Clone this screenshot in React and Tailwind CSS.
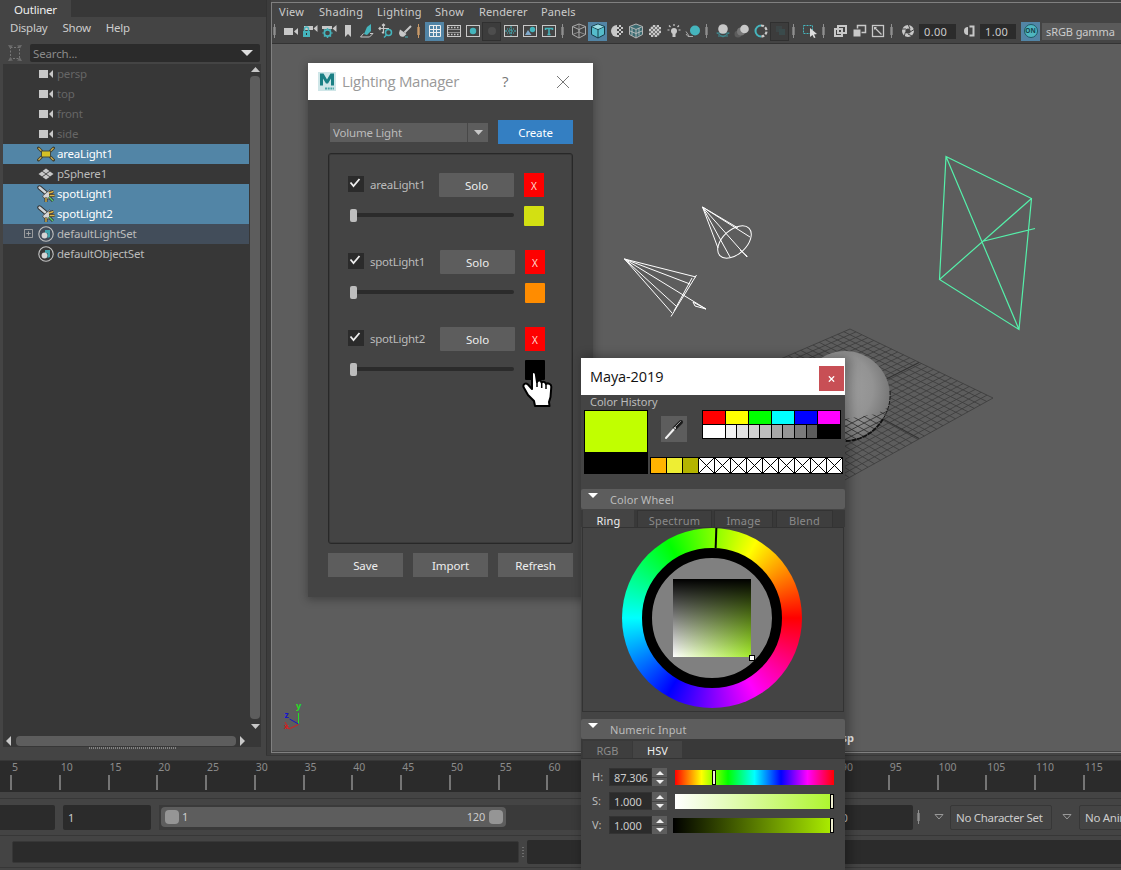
import React from "react";

const TEAL = "#45b5bd";
const LIGHT = "#c8c8c8";

/* ---------- toolbar ---------- */

function Sep({ orange }) {
  return (
    <svg viewBox="0 0 5 20" className="ml-[2px] mr-1 h-5 w-[5px] shrink-0">
      <path d="M2.500 3V17" stroke={orange ? "#c99a68" : "#8f8f8f"} strokeWidth="1" />
      <path d="M2.500 6V14" stroke={orange ? "#c99a68" : "#8f8f8f"} strokeWidth="2.400" />
    </svg>
  );
}

function Tool({ active, off, children }) {
  const bg = active ? "bg-[#5285a6]" : off ? "bg-[#3c3c3c] border border-[#303030]" : "";
  return (
    <div className={"flex h-[19px] w-[19px] shrink-0 items-center justify-center " + bg}>
      <svg viewBox="0 0 16 16" className="h-4 w-4 shrink-0" fill="none" stroke={LIGHT} strokeWidth="1">
        {children}
      </svg>
    </div>
  );
}

function Cube({ fill, stroke }) {
  return (
    <g stroke={stroke} fill={fill} strokeLinejoin="round">
      <path d="M8 1L14.500 3.500V11.500L8 15L1.500 11.500V3.500Z" />
      <path d="M1.500 3.500L8 6.500L14.500 3.500M8 6.500V15" />
    </g>
  );
}

function Checker({ half }) {
  const cells = [];
  for (let y = 0; y < 6; y++)
    for (let x = 0; x < 6; x++)
      if ((x + y) % 2 === 0 && Math.hypot(x - 2.5, y - 2.5) < 3.3 && (!half || x > 2))
        cells.push(<rect key={x + "-" + y} x={2 + x * 2} y={2 + y * 2} width="2" height="2" />);
  return (
    <g fill={LIGHT} stroke="none">
      {!half && <circle cx="8" cy="8" r="6" fill="#777" />}
      {cells}
      {half && <path d="M8 2A6 6 0 0 0 8 14Z" />}
    </g>
  );
}

function Toolbar() {
  return (
    <div className="flex h-5 items-center">
      <svg viewBox="0 0 5 20" className="mr-1 h-5 w-[5px] shrink-0">
        <path d="M2.500 3V17" stroke="#8f8f8f" />
        <path d="M2.500 6V14" stroke="#8f8f8f" strokeWidth="2.400" />
      </svg>
      <Tool><g fill={LIGHT} stroke="none"><rect x="1" y="5" width="9" height="7" /><path d="M11 8.500L15 5V12Z" /></g></Tool>
      <Tool>
        <g fill={LIGHT} stroke="none"><rect x="2" y="3" width="9" height="4" /><path d="M11.500 5.500L15.500 2V9Z" /></g>
        <rect x="1" y="8" width="7" height="6" fill={TEAL} stroke="none" />
        <path d="M2.500 8V6A2 2 0 0 1 6.500 6V8" stroke={TEAL} strokeWidth="1.500" />
        <rect x="4" y="10" width="1" height="2" fill="#333" stroke="none" />
      </Tool>
      <Tool>
        <g fill={LIGHT} stroke="none"><rect x="1" y="3" width="10" height="3" /><path d="M11.500 5.500L15.500 2V9Z" /></g>
        <circle cx="6.500" cy="10" r="3.200" stroke={TEAL} strokeWidth="1.700" />
        <path d="M6.500 5V6M6.500 14V15M1.500 10H2.500M10.500 10H11.500M3 6.500L4 7.500M10 6.500L9 7.500M3 13.500L4 12.500M10 13.500L9 12.500" stroke={TEAL} strokeWidth="1.500" />
      </Tool>
      <Tool><path d="M5 2H11V14L8 11L5 14Z" fill={LIGHT} stroke="none" /></Tool>
      <Tool>
        <path d="M5 11L8 4L12 1V8L8 12Z" fill={TEAL} stroke="none" />
        <path d="M4.500 10.500L1.500 14H10.500L14 10.500H11" stroke={LIGHT} />
      </Tool>
      <Tool>
        <path d="M5.500 1V10M1 5.500H11M4 2.500L5.500 1L7 2.500M2.500 4L1 5.500L2.500 7M4 9L5.500 10.500" strokeWidth="1.200" />
        <circle cx="10.500" cy="9.500" r="3" stroke={TEAL} strokeWidth="1.500" />
        <path d="M8.500 12L6 14.500" stroke={TEAL} strokeWidth="1.500" />
      </Tool>
      <Tool><path d="M14 3L7.500 9.500" strokeWidth="2" /><path d="M3 6.500L9.500 11L7 13.500Q3 15 2 10" fill={LIGHT} stroke="none" /><path d="M8 14H11" stroke={TEAL} /></Tool>
      <Sep orange />
      <Tool active><path d="M2.500 2.500H13.500V13.500H2.500ZM6.500 2.500V13.500M9.500 2.500V13.500M2.500 6.500H13.500M2.500 9.500H13.500" stroke="#eee" /></Tool>
      <Tool><rect x="1.500" y="2.500" width="13" height="11" /><path d="M2 4.500H14M2 11.500H14" strokeDasharray="1.500 1.500" strokeWidth="1.500" /><path d="M2 6.500H14M2 9.500H14" strokeWidth=".6" /></Tool>
      <Tool><rect x="1.500" y="2.500" width="13" height="11" /><circle cx="8" cy="8" r="3.200" fill={TEAL} stroke="none" /></Tool>
      <Tool off><circle cx="8" cy="8" r="4" fill="#4d4d4d" stroke="none" /></Tool>
      <Tool><rect x="1.500" y="2.500" width="13" height="11" /><path d="M2 8H14M8 3V13" stroke={TEAL} strokeDasharray="2 1" /><path d="M4 6H12M4 10H12" stroke={TEAL} strokeDasharray="1 1" /></Tool>
      <Tool><rect x="1.500" y="2.500" width="13" height="11" /><circle cx="10.500" cy="6.500" r="2.700" fill={TEAL} stroke="none" /><path d="M3 12L6 7L9.500 12Z" fill="#7fa9cc" stroke="none" /></Tool>
      <Tool><rect x="1.500" y="2.500" width="13" height="11" /><path d="M4.500 7V5.500H11.500V7M8 5.500V11.500M6.500 11.500H9.500" stroke={TEAL} strokeWidth="1.500" /></Tool>
      <Sep />
      <Tool><Cube stroke="#aaa" fill="none" /><path d="M1.500 11.500L8 9L14.500 11.500M8 1V9" stroke="#aaa" strokeWidth=".7" /></Tool>
      <Tool active><Cube stroke="#173c48" fill="#55bccb" /><path d="M8 1.500L13.500 3.700L8 6L2.500 3.700Z" fill="#9bdce4" stroke="none" /></Tool>
      <Tool><Checker half /></Tool>
      <Tool><Cube stroke="#b5b5b5" fill="#3a6a70" /><path d="M4 5V12.500M11 5V12.500M2 8L8 10.500L14 8" stroke="#c8c8c8" strokeWidth=".8" /></Tool>
      <Tool><Checker /></Tool>
      <Tool>
        <circle cx="8" cy="8" r="3" fill={LIGHT} stroke="none" /><rect x="6.500" y="10" width="3" height="4" fill={LIGHT} stroke="none" />
        <path d="M8 1V3M1.500 7H3.500M12.500 7H14.500M3 2.500L4.500 4M13 2.500L11.500 4" strokeWidth="1.200" />
      </Tool>
      <Tool><circle cx="10" cy="7.500" r="5" fill={TEAL} stroke="none" /><path d="M1 8.500L4 13M1 11L3 13.500M3 13.500H8" stroke="#aaa" /></Tool>
      <Sep />
      <Tool>
        <path d="M1.500 10H14.500M3 13H13M2 10L8 14L14 10" stroke="#3c8a91" />
        <circle cx="8" cy="6" r="4.800" fill={LIGHT} stroke="none" />
      </Tool>
      <Tool><circle cx="4" cy="11" r="3.500" fill="#5c5c5c" stroke="none" /><circle cx="7" cy="8.500" r="4" fill="#777" stroke="none" /><circle cx="10.500" cy="6" r="4.300" fill={LIGHT} stroke="none" /></Tool>
      <Tool><path d="M8 2.500A5.500 5.500 0 0 0 8 13.500" stroke={TEAL} strokeWidth="2" /><path d="M8 2.500A5.500 5.500 0 0 1 8 13.500" strokeWidth="2.200" strokeDasharray="3 1.500" /></Tool>
      <Tool off><rect x="4" y="3" width="6" height="6" fill="#3c4546" stroke="none" /><rect x="7" y="6" width="6" height="6" fill="#3a4a4b" stroke="none" /></Tool>
      <Sep />
      <Tool><rect x="1.500" y="2.500" width="9" height="8" stroke={TEAL} strokeDasharray="2 1" /><path d="M8 5L15 11L12 11.500L13.500 14.500L12 15L10.500 12L8 14Z" fill="#ddd" stroke="none" /></Tool>
      <Sep />
      <Tool><g strokeWidth="2"><rect x="6" y="3" width="8" height="7" /><rect x="3" y="6" width="7" height="7" /></g></Tool>
      <Tool><rect x="6.500" y="2.500" width="8" height="7" strokeWidth="1.500" /><rect x="2" y="6" width="8" height="8" fill={LIGHT} stroke="#444" /></Tool>
      <Tool><rect x="2.500" y="2.500" width="11" height="11" strokeWidth="1.300" /><path d="M5 5L11.500 11.500" strokeWidth="1.300" /><path d="M4 4H7L4 7Z" fill={LIGHT} stroke="none" /></Tool>
      <Sep />
      <Tool>
        <circle cx="8" cy="8" r="4.300" strokeWidth="3.400" />
        <path d="M8 1L10 6M15 6L10 9M12 13L8 11M4 14L5.500 9M1 6L6 6" stroke="#444" />
      </Tool>
      <div className="ml-[2px] h-[15px] w-[37px] bg-[#2b2b2b] pl-[5px] text-[11px] leading-[15px] tracking-[.35px] text-[#ccc]">0.00</div>
      <div className="ml-[3px] flex">
        <Tool><path d="M8.500 3.500H12.500V12.500H8.500" strokeWidth="2" /><path d="M7 4A4 4 0 0 0 7 12Z" fill={LIGHT} stroke="none" /></Tool>
      </div>
      <div className="ml-[2px] h-[15px] w-[36px] bg-[#2b2b2b] pl-[5px] text-[11px] leading-[15px] tracking-[.35px] text-[#ccc]">1.00</div>
      <div className="ml-[5px] flex h-[19px] w-[19px] shrink-0 items-center justify-center bg-[#5285a6]">
        <div className="flex h-[14px] w-[14px] items-center justify-center rounded-full border border-[#1d5a66] bg-[#4fb6c0] text-[6.500px] font-bold text-[#17444c]">ON</div>
      </div>
      <div className="ml-[2px] h-[17px] grow whitespace-nowrap bg-[#5a5a5a] pl-1 text-[11px] leading-[18px] tracking-[-.1px] text-[#ccc]">sRGB gamma</div>
    </div>
  );
}

/* ---------- outliner ---------- */

const CamIcon = () => (
  <svg viewBox="0 0 16 16" className="h-4 w-4"><path d="M1 4H10V12H1ZM11 8L15 4V12Z" fill={LIGHT} /></svg>
);
const AreaIcon = () => (
  <svg viewBox="0 0 18 16" className="h-4 w-[18px]" fill="none">
    <path d="M1.500 2L4.500 5M16.500 2L13.500 5M1.500 14L4.500 11M16.500 14L13.500 11" stroke="#3d3d2c" strokeWidth="3" strokeLinecap="round" />
    <path d="M1.500 2L4.500 5M16.500 2L13.500 5M1.500 14L4.500 11M16.500 14L13.500 11" stroke="#c8a94f" strokeWidth="1.400" />
    <rect x="4.500" y="5" width="9" height="6" fill="#d6c024" stroke="#444a3c" />
  </svg>
);
const MeshIcon = () => (
  <svg viewBox="0 0 16 16" className="h-4 w-4">
    <path d="M8 2.500L11.500 5L8 7.500L4.500 5ZM4 5.500L7.500 8L4 10.500L.5 8ZM12 5.500L15.500 8L12 10.500L8.500 8ZM8 8.500L11.500 11L8 13.500L4.500 11Z" fill={LIGHT} />
  </svg>
);
const SpotIcon = () => (
  <svg viewBox="0 0 18 18" className="h-[18px] w-[18px]" fill="none">
    <path d="M2.500 2.500L9 8" stroke="#333" strokeWidth="4.400" strokeLinecap="round" />
    <path d="M2.500 2.500L9 8" stroke="#cfd6da" strokeWidth="2.400" strokeLinecap="round" />
    <path d="M12.500 5A5 5 0 1 1 5.500 11Z" fill="#d4d4d4" stroke="#444" strokeWidth=".8" />
    <path d="M12 8L16.500 6.500M12 10.500H17.500M12 12L16 16M9 12.500V17" stroke="#333" strokeWidth="3" />
    <path d="M12 8L16.500 6.500M12.500 10.500H17.500" stroke="#dcb548" strokeWidth="1.400" />
    <path d="M12 12L16 16" stroke="#5fc96a" strokeWidth="1.400" />
    <path d="M9 13V17" stroke="#dcb548" strokeWidth="1.400" />
  </svg>
);
const SetIcon = () => (
  <svg viewBox="0 0 16 16" className="h-4 w-4" fill="none">
    <circle cx="8" cy="8" r="7.200" stroke="#c0c0c0" strokeWidth="1.100" />
    <path d="M7 4H12V11L9.500 12V7H7Z" fill="#3fa3ac" />
    <circle cx="6.500" cy="9.500" r="2.900" fill="#d5d5d5" />
  </svg>
);

const NODES = [
  { name: "persp", icon: CamIcon, kind: "dim" },
  { name: "top", icon: CamIcon, kind: "dim" },
  { name: "front", icon: CamIcon, kind: "dim" },
  { name: "side", icon: CamIcon, kind: "dim" },
  { name: "areaLight1", icon: AreaIcon, kind: "sel" },
  { name: "pSphere1", icon: MeshIcon },
  { name: "spotLight1", icon: SpotIcon, kind: "sel" },
  { name: "spotLight2", icon: SpotIcon, kind: "sel" },
  { name: "defaultLightSet", icon: SetIcon, kind: "rel", expand: true },
  { name: "defaultObjectSet", icon: SetIcon },
];
const ROW = {
  dim: "text-[#666]",
  sel: "bg-[#5285a6] text-white",
  rel: "bg-[#424d5a] text-[#bbb]",
};

function Tri({ dir = "down", className = "", fill = LIGHT }) {
  const d = { down: "M0 0H10L5 5Z", up: "M0 5H10L5 0Z" }[dir];
  return <svg viewBox="0 0 10 5" className={className} preserveAspectRatio="none"><path d={d} fill={fill} /></svg>;
}

function Outliner() {
  return (
    <div className="flex h-[756px] w-[266px] shrink-0 flex-col bg-[#444]">
      <div className="flex h-[17px] bg-[#373737]">
        <div className="w-[71px] bg-[#444] pl-[14px] pt-[2px] text-[11.500px] leading-[15px] tracking-[-.2px] text-[#eee]">Outliner</div>
      </div>
      <div className="flex h-[26px] gap-[15px] pl-[10px] pt-[3px] text-[11.500px] leading-4 tracking-[-.25px] text-[#ccc]">
        <span>Display</span><span>Show</span><span>Help</span>
      </div>
      <div className="flex h-[21px] items-start pl-[7px] pt-[1px]">
        <svg viewBox="0 0 16 18" className="mr-[7px] h-[18px] w-4" fill="none">
          <rect x="3.500" y="3.500" width="9" height="11" stroke="#777" strokeDasharray="2 1.500" />
          <path d="M1 1L6 1.500L3 4.500ZM15 1L10 1.500L13 4.500ZM1 17L6 16.500L3 13.500ZM15 17L10 16.500L13 13.500Z" fill="#6c6c6c" />
        </svg>
        <div className="flex h-[18px] w-[230px] items-center justify-between rounded-[2px] bg-[#2b2b2b] pl-[3px] pr-[7px]">
          <span className="pt-[2px] text-[11.500px] tracking-[-.15px] text-[#8a8a8a]">Search...</span>
          <Tri className="h-[6px] w-3" fill="#ddd" />
        </div>
      </div>
      <div className="ml-[3px] flex h-[683px] w-[258px] flex-col bg-[#373737]">
        <div className="flex h-[668px]">
          <div className="w-[246px]">
            {NODES.map((n) => (
              <div key={n.name} className={"flex h-5 items-center text-[11.500px] tracking-[-.2px] " + (ROW[n.kind] || "text-[#bbb]")}>
                <div className="flex w-[33px] justify-end pr-[3px]">
                  {n.expand && (
                    <svg viewBox="0 0 10 10" className="mb-[2px] h-[9px] w-[9px]" fill="none" stroke="#aaa"><path d="M.5.5H9.500V9.500H.5ZM2.500 5H7.500M5 2.500V7.500" /></svg>
                  )}
                </div>
                <div className="mr-px flex w-5 justify-center"><n.icon /></div>
                <span className="leading-5">{n.name}</span>
              </div>
            ))}
          </div>
          <div className="flex w-3 flex-col items-center">
            <Tri dir="up" className="mt-[3px] h-[5px] w-[9px]" />
            <div className="mt-[4px] w-[10px] grow rounded-[4px] bg-[#5d5d5d]" />
            <Tri className="mb-[3px] mt-[5px] h-[5px] w-[9px]" />
          </div>
        </div>
        <div className="flex h-[15px] items-start gap-1 pl-[3px] pt-1">
          <svg viewBox="0 0 5 10" className="h-[10px] w-[5px]"><path d="M5 0V10L0 5Z" fill={LIGHT} /></svg>
          <div className="ml-[1px] h-[10px] w-[220px] rounded-[4px] bg-[#5d5d5d]" />
          <svg viewBox="0 0 5 10" className="h-[10px] w-[5px]"><path d="M0 0V10L5 5Z" fill={LIGHT} /></svg>
        </div>
      </div>
      <svg viewBox="0 0 87 2" className="ml-[89px] h-[2px] w-[87px]"><path d="M0 1H87" stroke="#999" strokeWidth="1.500" strokeDasharray="1 1" /></svg>
    </div>
  );
}

/* ---------- viewport ---------- */

const T = [850, 329], R = [993, 398], B = [843, 481], L = [702, 393];
const mix = (a, b, t) => [a[0] + (b[0] - a[0]) * t, a[1] + (b[1] - a[1]) * t];

function gridPath() {
  let d = "";
  for (let i = 0; i <= 24; i++) {
    const t = i / 24;
    const seg = [[mix(T, R, t), mix(L, B, t)], [mix(T, L, t), mix(R, B, t)]];
    for (const [a, b] of seg) d += `M${a[0].toFixed(1)} ${a[1].toFixed(1)}L${b[0].toFixed(1)} ${b[1].toFixed(1)}`;
  }
  return d;
}

function Scene() {
  return (
    <svg viewBox="272 44 849 707" className="block h-[707px] w-[849px]" fill="none">
      <defs>
        <radialGradient id="ball" cx="0.42" cy="0.42" r="0.6">
          <stop offset="0" stopColor="#a2a2a2" />
          <stop offset="0.65" stopColor="#939393" />
          <stop offset="1" stopColor="#757575" />
        </radialGradient>
        <clipPath id="lower"><path d="M800 424L845 419L876 414L892 405V445H800Z" /></clipPath>
        <clipPath id="disc"><circle cx="845" cy="396" r="45" /></clipPath>
      </defs>
      <path d={gridPath()} stroke="#3d3d3d" strokeWidth=".85" />
      <path d="M919 362.500L772 437M919 438.500L776 361" stroke="#333" strokeWidth="1.200" />
      <circle cx="845" cy="396" r="45" fill="url(#ball)" />
      <g clipPath="url(#disc)"><path d={gridPath()} stroke="#2e2e2e" strokeWidth=".8" clipPath="url(#lower)" /></g>
      <path d="M890 391A45 45 0 0 1 883 419" stroke="#161616" strokeWidth="1" strokeDasharray="4 1" />
      <path d="M883 419A45 45 0 0 1 845 441" stroke="#111" strokeWidth="1.800" strokeDasharray="5 .7" />

      <g stroke="#55f0aa" strokeWidth="1.200">
        <path d="M946 156.500L1031.500 198.500L1019 329.500L939.500 279.500ZM946 156.500L1019 329.500M1031.500 198.500L939.500 279.500M982 241.500L1035 228.500" />
      </g>

      <g stroke="#fff" strokeWidth="1">
        <path d="M702.500 207L738 228M702.500 207L750 237M702.500 207L747 257M702.500 207L730 257M702.500 207L718 248M740 250L747.500 256.500" />
        <ellipse cx="734.500" cy="242" rx="20" ry="12" transform="rotate(-43 734.500 242)" />
        <path d="M624.500 259L696 277M624.500 259L690 284M624.500 259L706 309M624.500 259L676 306M624.500 259L672 313M696.500 275L671 316.500M692 278L674 311" />
        <path d="M693 302L706 309L695 306Z" />
      </g>
      <path d="M298.500 724V713" stroke="#25e025" />
      <path d="M298.500 724L289.500 719" stroke="#1515c8" />
      <path d="M298.500 724.500L289 729L285 722" stroke="#d42020" />
      <g fontFamily="Noto Sans, sans-serif" fontSize="9" fontWeight="700">
        <text x="296" y="709" fill="#25e025">y</text>
        <text x="284.500" y="717.500" fill="#1515c8" fontSize="8.500">z</text>
        <text x="284" y="728.500" fill="#d42020" fontSize="7.500">x</text>
        <text x="823" y="742" fontSize="11" fill="#eee">persp</text>
      </g>
    </svg>
  );
}

function Viewport() {
  return (
    <div className="mt-[2px] flex h-[751px] w-[850px] shrink-0 flex-col overflow-hidden border-b border-l border-t border-[#808080] bg-[#444]">
      <div className="flex h-[18px] pl-[7px] pt-px text-[11px] leading-4 tracking-[.3px] text-[#ccc]">
        <span className="w-10">View</span>
        <span className="w-[58px]">Shading</span>
        <span className="w-[58px]">Lighting</span>
        <span className="w-11">Show</span>
        <span className="w-[62px] tracking-[.1px]">Renderer</span>
        <span className="tracking-[.1px]">Panels</span>
      </div>
      <Toolbar />
      <div className="mt-[2px] h-[708px] overflow-hidden border-t border-[#333] bg-[#5d5d5d]"><Scene /></div>
    </div>
  );
}

/* ---------- timeline and range ---------- */

function Timeline() {
  const ticks = Array.from({ length: 23 }, (_, i) => (i + 1) * 5);
  const covered = (n) => n > 60 && n < 90;
  return (
    <div className="mt-[4px] h-8 border-t border-[#373737] bg-[#2b2b2b]">
      <div className="flex w-[1130px] pl-[10px]">
        {ticks.map((n) => (
          <div key={n} className="h-8 w-[48.780px] shrink-0">
            <div className="h-[14px] pl-[2px] text-[10.500px] leading-[12px] text-[#8c8c8c]">{covered(n) ? null : n}</div>
            <div className="h-[15px] w-[2px] bg-[#757575]" />
          </div>
        ))}
      </div>
    </div>
  );
}

function RangeRow() {
  return (
    <div className="mt-[6px] flex h-[38px] items-center border-y border-[#373737] text-[11px] text-[#ccc]">
      <div className="h-[25px] w-[55px] shrink-0 rounded-r-[2px] bg-[#2b2b2b]" />
      <div className="ml-2 h-[25px] w-[88px] shrink-0 rounded-[2px] bg-[#2b2b2b] pl-[5px] leading-[26px]">1</div>
      <div className="ml-2 flex h-[25px] w-[600px] shrink-0 items-center bg-[#3a3a3a]">
        <div className="ml-[2px] flex h-[20px] w-[345px] items-center justify-between rounded-[4px] bg-[#5d5d5d] pl-1 pr-[3px]">
          <span className="flex items-center gap-[3px]"><i className="h-[14px] w-[14px] rounded-[4px] bg-[#959595]" />1</span>
          <span className="flex items-center gap-1 tracking-[-.2px]">120<i className="h-[14px] w-[14px] rounded-[4px] bg-[#959595]" /></span>
        </div>
      </div>
      <div className="ml-2 h-[25px] w-[146px] shrink-0 rounded-[2px] bg-[#2b2b2b] pl-[62px] leading-[25px]">200</div>
      <div className="ml-px flex"><Sep /></div>
      <svg viewBox="0 0 10 6" className="ml-[9px] h-[6px] w-[10px] shrink-0" fill="none" stroke="#999"><path d="M1 .5H9L5 5Z" /></svg>
      <div className="ml-[6px] h-[25px] w-[102px] shrink-0 rounded-[2px] border border-[#373737] bg-[#444] pl-[5px] text-[11.500px] leading-[24px] tracking-[-.3px]">No Character Set</div>
      <svg viewBox="0 0 10 6" className="ml-[10px] h-[6px] w-[10px] shrink-0" fill="none" stroke="#999"><path d="M1 .5H9L5 5Z" /></svg>
      <div className="ml-[7px] h-[25px] w-[102px] shrink-0 whitespace-nowrap rounded-[2px] border border-[#373737] pl-[5px] text-[11.500px] leading-[24px] tracking-[-.3px]">No Anim Layer</div>
    </div>
  );
}

function CommandLine() {
  return (
    <div className="flex h-8 items-center border-b border-[#373737]">
      <div className="ml-3 h-[22px] w-[507px] shrink-0 rounded-[2px] border border-[#373737] bg-[#2b2b2b]" />
      <svg viewBox="0 0 2 10" className="ml-[3px] h-[10px] w-[2px] shrink-0"><path d="M1 0V10" stroke="#999" strokeDasharray="1 2" /></svg>
      <div className="ml-[3px] h-6 grow rounded-l-[2px] bg-[#2b2b2b]" />
    </div>
  );
}

/* ---------- lighting manager window ---------- */

const LIGHTS = [
  { name: "areaLight1", swatch: "bg-[#d3e012]", inset: "pl-0" },
  { name: "spotLight1", swatch: "bg-[#ff8c00]", inset: "pl-px" },
  { name: "spotLight2", swatch: "bg-black", inset: "pl-px" },
];

function LightRow({ light }) {
  return (
    <div className="h-[77px]">
      <div className="flex h-6 items-center">
        <svg viewBox="0 0 16 16" className="mb-[2px] h-4 w-4 bg-[#2b2b2b]" fill="none"><path d="M2.500 6.500L5.500 10L11.500 3" stroke="#eee" strokeWidth="1.800" /></svg>
        <span className="w-[75px] pl-[6px] text-[11.500px] tracking-[-.25px] text-[#bbb]">{light.name}</span>
        <div className={"flex " + light.inset}>
          <div className="h-6 w-[75px] rounded-[1px] bg-[#5d5d5d] text-center text-[11.500px] leading-[26px] text-[#eee]">Solo</div>
          <div className="ml-[10px] h-6 w-5 bg-[#fe0000] text-center text-[10px] leading-[26px] text-[#ffd8d0]">X</div>
        </div>
      </div>
      <div className="mt-[9px] flex h-5 items-center">
        <div className="flex h-5 w-[166px] items-center pb-[2px]">
          <div className="ml-[2px] h-[13px] w-[7px] rounded-[2px] bg-[#bdbdbd]" />
          <div className="h-[4px] grow rounded-r bg-[#2b2b2b]" />
        </div>
        <div className={"ml-[10px] " + light.inset}><div className={"h-5 w-5 rounded-[1px] " + light.swatch} /></div>
      </div>
    </div>
  );
}

function LightingManager() {
  return (
    <div className="absolute left-[308px] top-[63px] h-[534px] w-[285px] bg-[#444] shadow-[0_2px_8px_1px_rgba(0,0,0,.28)]">
      <div className="flex h-[37px] items-center bg-white pl-[9px]">
        <svg viewBox="0 0 20 20" className="h-5 w-5">
          <rect x="1" y="0" width="18" height="19" fill="#cfe6e8" />
          <path d="M3 1.500H6.500L10 7.500L13.500 1.500H17V13.500H14V6.500L11 11.500H9L6 6.500V13.500H3Z" fill="#1b8085" />
          <path d="M8 16.500H17" stroke="#4ba6a8" strokeWidth="2" strokeDasharray="2 .7" />
        </svg>
        <span className="w-[165px] whitespace-nowrap pl-[5px] font-['Open_Sans'] text-[15px] tracking-[-.27px] text-[#999]">Lighting Manager</span>
        <span className="font-['Open_Sans'] text-[15px] text-[#777]">?</span>
        <svg viewBox="0 0 12 12" className="ml-[49px] h-3 w-3" stroke="#777"><path d="M0 0L12 12M12 0L0 12" /></svg>
      </div>
      <div className="px-5 pt-5">
        <div className="flex h-6 items-center">
          <div className="ml-[2px] flex h-[19px] w-[158px] bg-[#5d5d5d]">
            <div className="w-[138px] border-r border-[#484848] pl-[3px] text-[11.500px] leading-[20px] tracking-[-.2px] text-[#bbb]">Volume Light</div>
            <div className="flex grow items-center justify-center"><Tri className="h-[5px] w-[9px]" /></div>
          </div>
          <div className="ml-[10px] h-6 w-[75px] bg-[#347fc2] text-center text-[11.500px] leading-[26px] tracking-[-.15px] text-white">Create</div>
        </div>
        <div className="mt-[9px] h-[391px] rounded-[3px] border border-[#282828] pl-[19px] pt-[19px] shadow-[inset_0_0_0_1px_#3a3a3a]">
          {LIGHTS.map((l) => <LightRow key={l.name} light={l} />)}
        </div>
        <div className="mt-[9px] flex gap-[10px] text-center text-[11.500px] leading-[26px] tracking-[-.1px] text-[#eee]">
          {["Save", "Import", "Refresh"].map((t) => <div key={t} className="h-6 w-[75px] bg-[#5d5d5d]">{t}</div>)}
        </div>
      </div>
    </div>
  );
}

/* ---------- colour chooser window ---------- */

function Section({ title }) {
  return (
    <div className="flex h-5 items-center rounded-[2px] bg-[#5d5d5d]">
      <Tri className="mb-[7px] ml-[7px] h-[5px] w-[10px]" fill="#fff" />
      <span className="ml-[12px] pt-[2px] text-[11px] tracking-[.1px] text-[#bbb]">{title}</span>
    </div>
  );
}

function NumberRow({ label, value, bar, knob, wide }) {
  return (
    <div className="flex h-6 items-center">
      <span className="w-[17px] pt-px text-[11px] text-[#bbb]">{label}:</span>
      <div className="h-[18px] w-[43px] border border-[#333] bg-[#2b2b2b] pl-1 text-[11px] leading-[18px] tracking-[-.1px] text-[#ccc]">{value}</div>
      <div className="flex h-[18px] w-[15px] flex-col gap-px">
        <div className="flex h-[9px] items-center justify-center bg-[#5d5d5d]"><Tri dir="up" className="h-1 w-2" fill="#eee" /></div>
        <div className="flex h-[8px] items-center justify-center bg-[#5d5d5d]"><Tri className="h-1 w-2" fill="#eee" /></div>
      </div>
      <div className={(wide ? "ml-[6px] w-[161px]" : "ml-[8px] w-[159px]") + " flex h-[15px] " + bar}>
        <div className={"h-[15px] w-1 border border-black bg-[#efefcf] " + knob} />
      </div>
    </div>
  );
}

const HUES = ["bg-[#f00]", "bg-[#ff0]", "bg-[#0f0]", "bg-[#0ff]", "bg-[#00f]", "bg-[#f0f]"];
const GREYS = [
  "w-[22px] bg-white", "w-[10.500px] bg-[#f2f2f2]", "w-[11px] bg-[#e2e2e2]", "w-[10.500px] bg-[#d0d0d0]", "w-[11px] bg-[#bdbdbd]",
  "w-[10.500px] bg-[#a8a8a8]", "w-[11px] bg-[#969696]", "w-[10.500px] bg-[#7a7a7a]", "w-[11px] bg-[#5c5c5c]", "w-[22px] bg-black",
];
const HISTORY = ["bg-[#ffb400]", "bg-[#eeee33]", "bg-[#b4b400]"];

function ColorChooser() {
  return (
    <div className="absolute left-[581px] top-[358px] h-[512px] w-[264px] overflow-hidden bg-[#444]">
      <div className="flex h-[37px] items-center justify-between bg-white pl-[9px] pr-[1px]">
        <span className="font-['Open_Sans'] text-[14.500px] tracking-[-.1px] text-[#111]">Maya-2019</span>
        <div className="mt-1 flex h-[25px] w-[25px] items-center justify-center bg-[#c84f55]">
          <svg viewBox="0 0 8 8" className="h-[6px] w-[7px]" stroke="#fff" strokeWidth="1.800"><path d="M.5.5L7.500 7.500M7.500.5L.5 7.500" /></svg>
        </div>
      </div>
      <div className="h-[15px] pl-[9px] text-[11px] leading-[13px] text-[#bbb]">Color History</div>
      <div className="flex h-[79px] pl-[3px]">
        <div className="h-[64px] w-[64px] border border-black bg-black"><div className="h-[41px] bg-[#c1ff00]" /></div>
        <div className="ml-[2px] w-[193px]">
          <div className="flex h-[47px] justify-between pl-[11px] pr-[2px]">
            <div className="mt-[6px] h-[26px] w-[26px] bg-[#5d5d5d]">
              <svg viewBox="0 0 26 26" className="h-[26px] w-[26px]" strokeLinecap="round">
                <path d="M14 12L20 6" stroke="#1c1c1c" strokeWidth="4" /><path d="M14.500 10.500L19.500 5.500" stroke="#999" strokeWidth="1" />
                <path d="M5 22L14 12" stroke="#f2f2f2" strokeWidth="2" /><path d="M12 11.500L14.500 14" stroke="#333" strokeWidth="1" />
              </svg>
            </div>
            <div className="h-[29px] w-[139px] bg-black p-px">
              <div className="flex h-[13px] gap-px">{HUES.map((h) => <div key={h} className={"h-[13px] grow " + h} />)}</div>
              <div className="mt-px flex h-[13px] gap-px">{GREYS.map((g) => <div key={g} className={"h-[13px] " + g} />)}</div>
            </div>
          </div>
          <div className="flex h-[17px] w-[193px] gap-px border border-black bg-black">
            {Array.from({ length: 12 }, (_, i) => (
              <div key={i} className={"h-[15px] w-[15px] shrink-0 " + (HISTORY[i] || "bg-white")}>
                {i > 2 && <svg viewBox="0 0 15 15" className="h-[15px] w-[15px]" stroke="#000"><path d="M0 0L15 15M15 0L0 15" /></svg>}
              </div>
            ))}
          </div>
        </div>
      </div>
      <Section title="Color Wheel" />
      <div className="mt-px flex h-[17px] bg-[#393939] pl-[2px] text-center text-[11px] leading-[21px] tracking-[.2px] text-[#8a8a8a]">
        <div className="w-[51px] bg-[#444] text-[#eee]">Ring</div>
        <div className="ml-[3px] w-[75px] border-x border-t border-[#333] bg-[#3e3e3e] leading-[19px]">Spectrum</div>
        <div className="ml-[2px] w-[59px] border-x border-t border-[#333] bg-[#3e3e3e] leading-[19px]">Image</div>
        <div className="ml-[3px] w-[57px] border-x border-t border-[#333] bg-[#3e3e3e] leading-[19px]">Blend</div>
      </div>
      <div className="mx-px flex h-[185px] justify-center border border-[#333] pr-[2px]">
        <div className="flex h-[180px] w-[180px] items-center justify-center rounded-full bg-[conic-gradient(from_90deg,#f00,#f0f,#00f,#0ff,#0f0,#ff0,#f00)]">
          <div className="flex h-[140px] w-[140px] items-center justify-center rounded-full border-[10.500px] border-black bg-[#808080]">
            <div className="relative h-[78px] w-[78px] bg-[linear-gradient(to_bottom,#000,transparent),linear-gradient(to_right,#fff,#a4ec2c)]">
              <div className="absolute -bottom-1 -right-1 h-[6px] w-[6px] border border-black bg-white" />
              <div className="absolute -top-[51px] left-[42px] h-5 w-[2px] rotate-[2deg] bg-black" />
            </div>
          </div>
        </div>
      </div>
      <div className="mt-[7px]"><Section title="Numeric Input" /></div>
      <div className="flex h-5 items-end border-b border-[#333] bg-[#393939] pl-[2px] text-center text-[11px] leading-[19px] text-[#8a8a8a]">
        <div className="h-[17px] w-[49px] bg-[#3e3e3e]">RGB</div>
        <div className="ml-[1px] h-[17px] w-[49px] bg-[#444] text-[#eee]">HSV</div>
      </div>
      <div className="pl-[11px] pt-[6px]">
        <NumberRow label="H" value="87.306" bar="bg-[linear-gradient(to_right,#f00,#ff0,#0f0,#0ff,#00f,#f0f,#f00)]" knob="ml-[37px]" />
        <NumberRow label="S" value="1.000" bar="bg-[linear-gradient(to_right,#fff,#adf52b)]" knob="ml-auto" />
        <NumberRow label="V" value="1.000" wide bar="bg-[linear-gradient(to_right,#000,#adf000)]" knob="ml-auto" />
      </div>
    </div>
  );
}

function HandCursor() {
  return (
    <svg viewBox="0 0 32 38" className="absolute left-[522px] top-[370px] h-[38px] w-8">
      <path d="M10 3C11 1.500 13.500 2 13.800 4L15 12C16 10 19 10 19.500 12.500C21 11 23.500 12 24 14C26 12.500 29.500 14 29.300 17L28.500 27L27 32L27.500 36H13L12 31L6 25L1.500 17C.8 14 3.500 12.500 6 14.500L10 19Z" fill="#fff" stroke="#000" strokeWidth="2" strokeLinejoin="round" />
      <path d="M15 11V17M19.700 12V18M24 14V19" stroke="#000" strokeWidth="1.500" />
    </svg>
  );
}

export default function App() {
  return (
    <div className="relative h-[870px] w-[1121px] overflow-hidden bg-[#444] font-['Noto_Sans','Open_Sans',sans-serif]">
      <div className="flex h-[756px] border-b border-[#373737] bg-[#444]">
        <Outliner />
        <div className="w-[5px] shrink-0 border-l border-[#333] bg-[#3c3c3c]" />
        <Viewport />
      </div>
      <Timeline />
      <RangeRow />
      <CommandLine />
      <LightingManager />
      <div className="absolute left-[581px] top-[358px] h-[512px] w-[264px] shadow-[3px_0_10px_2px_rgba(0,0,0,.3)]" />
      <ColorChooser />
      <HandCursor />
    </div>
  );
}
